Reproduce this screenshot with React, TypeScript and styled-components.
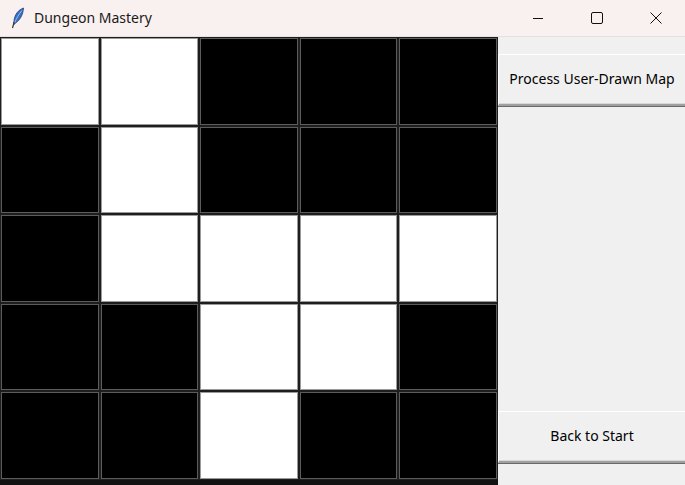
import React from "react";
import styled, { createGlobalStyle } from "styled-components";

const Global = createGlobalStyle`
  html, body { margin: 0; padding: 0; background: #f0f0f0; }
  body { font-family: "Noto Sans", "Open Sans", sans-serif; }
`;

const Window = styled.div`
  width: 685px;
  height: 485px;
  display: flex;
  flex-direction: column;
  overflow: hidden;
  background: #f0f0f0;
`;

const TitleBar = styled.div`
  height: 36px;
  flex: 0 0 36px;
  background: #f9f0f0;
  border-bottom: 1px solid #e6e0e0;
  display: flex;
  align-items: center;
`;

const AppIcon = styled.div`
  width: 34px;
  display: flex;
  justify-content: center;
  padding-left: 2px;
  box-sizing: border-box;
`;

const Title = styled.div`
  font-family: "Noto Sans", sans-serif;
  font-size: 14px;
  color: #1a1a1a;
  flex: 1;
  margin-top: -1px;
`;

const Controls = styled.div`
  display: flex;
  height: 100%;
`;

const CtrlButton = styled.div`
  width: 59px;
  height: 100%;
  display: flex;
  align-items: center;
  justify-content: center;
`;

const Body = styled.div`
  flex: 1;
  display: flex;
`;

const Board = styled.div`
  width: 498px;
  flex: 0 0 498px;
  background: #121212;
  padding-bottom: 5px;
  display: flex;
`;

const Grid = styled.div`
  flex: 1;
  display: grid;
  grid-template-columns: repeat(5, 1fr);
  grid-template-rows: repeat(5, 1fr);
`;

const Cell = styled.div<{ $on: boolean }>`
  background: ${(p) => (p.$on ? "#ffffff" : "#000000")};
  border: 1px solid #1e1e1e;
  box-shadow: inset 0 0 0 1px ${(p) => (p.$on ? "#9a9a9a" : "#5c5c5c")};
`;

const Panel = styled.div`
  flex: 1;
  display: flex;
  flex-direction: column;
  justify-content: space-between;
  padding: 17px 0 22px;
  background: #f0f0f0;
`;

const TkButton = styled.button`
  height: 52px;
  width: 100%;
  background: #f0f0f0;
  border: none;
  border-top: 1px solid #ffffff;
  border-left: 1px solid #ffffff;
  border-bottom: 2px solid #a0a0a0;
  box-shadow: inset 0 -1px 0 #d8d8d8, 0 1px 0 #696969;
  font-family: "Noto Sans", sans-serif;
  font-size: 14px;
  color: #000;
  padding: 0;
  padding-bottom: 2px;
`;

const map = [
  [1, 1, 0, 0, 0],
  [0, 1, 0, 0, 0],
  [0, 1, 1, 1, 1],
  [0, 0, 1, 1, 0],
  [0, 0, 1, 0, 0],
];

const Feather = () => (
  <svg width="14" height="22" viewBox="0 0 14 22">
    <path d="M12.5 1 C7 3 3.5 8 3 14 L2.5 18 L4.5 16 C9 13 12 8 12.5 1 Z" fill="#3b6fc4" stroke="#1d3f7a" strokeWidth="0.8" />
    <path d="M11 3.5 C8 7 5.5 11 3.5 16" stroke="#9fc3f0" strokeWidth="0.9" fill="none" />
    <path d="M3.2 15 L1.5 21" stroke="#333" strokeWidth="1.2" />
  </svg>
);

export default function App() {
  return (
    <>
      <Global />
      <Window>
        <TitleBar>
          <AppIcon>
            <Feather />
          </AppIcon>
          <Title>Dungeon Mastery</Title>
          <Controls>
            <CtrlButton>
              <svg width="12" height="12" viewBox="0 0 12 12">
                <path d="M1 6.5 H11" stroke="#111" strokeWidth="1" />
              </svg>
            </CtrlButton>
            <CtrlButton>
              <svg width="12" height="12" viewBox="0 0 12 12">
                <rect x="0.5" y="0.5" width="11" height="11" rx="1.5" stroke="#111" fill="none" strokeWidth="1" />
              </svg>
            </CtrlButton>
            <CtrlButton>
              <svg width="12" height="12" viewBox="0 0 12 12">
                <path d="M0.5 0.5 L11.5 11.5 M11.5 0.5 L0.5 11.5" stroke="#111" strokeWidth="1" />
              </svg>
            </CtrlButton>
          </Controls>
        </TitleBar>
        <Body>
          <Board>
            <Grid>
              {map.flatMap((row, r) =>
                row.map((v, c) => <Cell key={`${r}-${c}`} $on={v === 1} />)
              )}
            </Grid>
          </Board>
          <Panel>
            <TkButton>Process User-Drawn Map</TkButton>
            <TkButton>Back to Start</TkButton>
          </Panel>
        </Body>
      </Window>
    </>
  );
}
